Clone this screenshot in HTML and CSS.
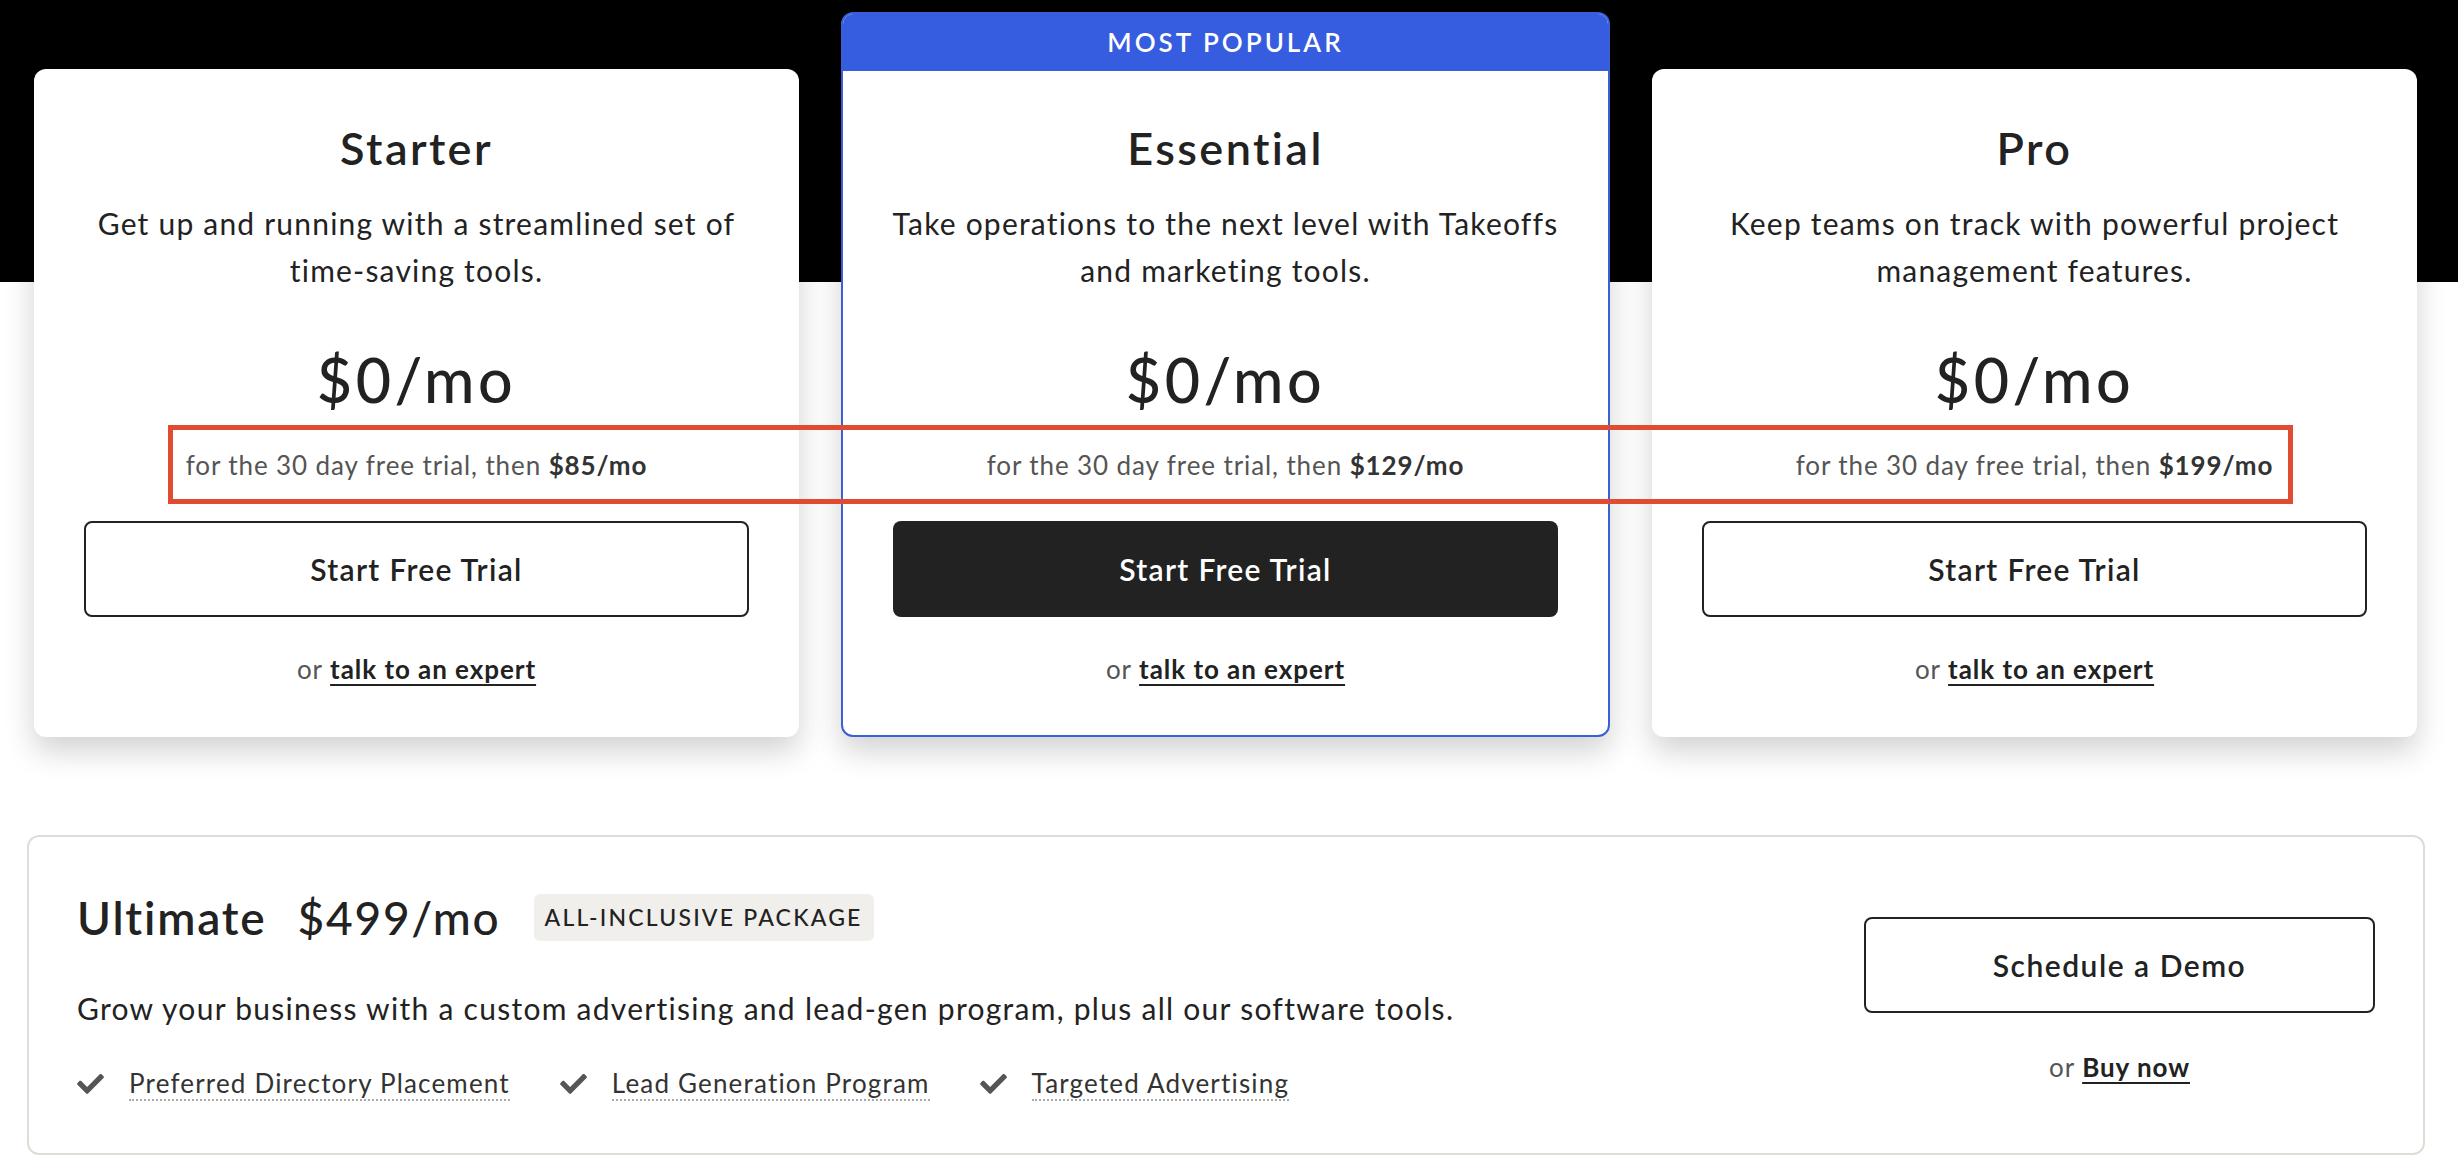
FILE: index.html
```html
<!DOCTYPE html>
<html lang="en">

<head>
  <meta charset="UTF-8">
  <meta name="viewport" content="width=device-width, initial-scale=1.0">
  <title>pricing</title>
  <link rel="stylesheet" href="styles.css">
</head>

<body>
  <div class="pricing">
    <div class="plans">
      <div class="plan">
        <div class="plan-body">
          <h2 class="plan-name">Starter</h2>
          <p class="plan-desc">Get up and running with a streamlined set of time&#8209;saving tools.</p>
          <div class="plan-price">$0/mo</div>
          <p class="plan-trial">for the 30 day free trial, then <b>$85/mo</b></p>
          <a class="btn btn-outline" href="#">Start Free Trial</a>
          <p class="plan-alt">or <a href="#">talk to an expert</a></p>
        </div>
      </div>

      <div class="plan plan-featured">
        <div class="plan-badge">MOST POPULAR</div>
        <div class="plan-body">
          <h2 class="plan-name">Essential</h2>
          <p class="plan-desc">Take operations to the next level with Takeoffs and marketing tools.</p>
          <div class="plan-price">$0/mo</div>
          <p class="plan-trial">for the 30 day free trial, then <b>$129/mo</b></p>
          <a class="btn btn-dark" href="#">Start Free Trial</a>
          <p class="plan-alt">or <a href="#">talk to an expert</a></p>
        </div>
      </div>

      <div class="plan">
        <div class="plan-body">
          <h2 class="plan-name">Pro</h2>
          <p class="plan-desc">Keep teams on track with powerful project management features.</p>
          <div class="plan-price">$0/mo</div>
          <p class="plan-trial">for the 30 day free trial, then <b>$199/mo</b></p>
          <a class="btn btn-outline" href="#">Start Free Trial</a>
          <p class="plan-alt">or <a href="#">talk to an expert</a></p>
        </div>
      </div>
    </div>

    <!-- annotation box around the trial lines -->
    <div class="highlight"></div>

    <div class="ultimate">
      <div class="ultimate-info">
        <div class="ultimate-head">
          <h2 class="ultimate-name">Ultimate</h2>
          <span class="ultimate-price">$499/mo</span>
          <span class="tag">ALL-INCLUSIVE PACKAGE</span>
        </div>
        <p class="ultimate-desc">Grow your business with a custom advertising and lead-gen program, plus all our software tools.</p>
        <ul class="features">
          <li>
            <svg class="check" viewBox="0 0 512 400" aria-hidden="true"><path d="M174 391 8 225c-10-10-10-26 0-36l36-36c10-10 26-10 36 0l112 112L432 25c10-10 26-10 36 0l36 36c10 10 10 26 0 36L210 391c-10 10-26 10-36 0z"/></svg>
            <span>Preferred Directory Placement</span>
          </li>
          <li>
            <svg class="check" viewBox="0 0 512 400" aria-hidden="true"><path d="M174 391 8 225c-10-10-10-26 0-36l36-36c10-10 26-10 36 0l112 112L432 25c10-10 26-10 36 0l36 36c10 10 10 26 0 36L210 391c-10 10-26 10-36 0z"/></svg>
            <span>Lead Generation Program</span>
          </li>
          <li>
            <svg class="check" viewBox="0 0 512 400" aria-hidden="true"><path d="M174 391 8 225c-10-10-10-26 0-36l36-36c10-10 26-10 36 0l112 112L432 25c10-10 26-10 36 0l36 36c10 10 10 26 0 36L210 391c-10 10-26 10-36 0z"/></svg>
            <span>Targeted Advertising</span>
          </li>
        </ul>
      </div>
      <div class="ultimate-cta">
        <a class="btn btn-outline btn-demo" href="#">Schedule a Demo</a>
        <p class="plan-alt">or <a href="#">Buy now</a></p>
      </div>
    </div>
  </div>
</body>

</html>
```

FILE: styles.css
```css
/* reset */
html,
body,
h2,
p,
ul,
li {
  margin: 0;
  padding: 0;
  box-sizing: border-box;
  list-style: none;
}

*,
*::before,
*::after {
  box-sizing: border-box;
}

body {
  width: 2458px;
  height: 1172px;
  overflow: hidden;
  background-color: #fff;
  color: #222;
  font-family: Lato, "Liberation Sans", sans-serif;
  letter-spacing: 0.6px;
}

/* page */
.pricing {
  position: relative;
  background: linear-gradient(#000 0, #000 282px, #fff 282px);
}

.plans {
  display: flex;
  align-items: flex-end;
  gap: 42px;
  padding: 12px 41px 0 34px;
}

.plan {
  flex: 1;
  background-color: #fff;
  border-radius: 12px;
  box-shadow: 0 14px 30px rgba(0, 0, 0, 0.18);
  overflow: hidden;
}

.plan-featured {
  border: 2px solid #3a5fd6;
}

.plan-badge {
  height: 57px;
  line-height: 57px;
  background-color: #365de0;
  color: #fff;
  text-align: center;
  font-size: 26px;
  font-weight: 600;
  letter-spacing: 3px;
}

.plan-body {
  display: flex;
  flex-direction: column;
  align-items: center;
  padding: 52px 50px 50px;
  text-align: center;
}

.plan-featured .plan-body {
  padding-top: 50px;
  padding-bottom: 48px;
}

.plan-name {
  font-size: 45px;
  line-height: 54px;
  font-weight: 600;
  letter-spacing: 2.4px;
}

.plan-desc {
  margin: 25px -6px 0;
  font-size: 30px;
  line-height: 47px;
  letter-spacing: 1.2px;
}

.plan-price {
  margin-top: 51px;
  font-size: 61px;
  line-height: 70px;
  font-weight: 500;
  letter-spacing: 3.5px;
}

.plan-trial {
  margin-top: 32px;
  font-size: 26px;
  line-height: 36px;
  color: #555;
  letter-spacing: 0.9px;
}

.plan-trial b {
  color: #333;
  font-weight: 700;
}

.btn {
  display: flex;
  align-items: center;
  justify-content: center;
  width: 100%;
  height: 96px;
  border-radius: 8px;
  font-size: 30px;
  font-weight: 600;
  letter-spacing: 1.3px;
  text-decoration: none;
}

.plan-body .btn {
  margin-top: 38px;
}

.btn-outline {
  border: 2px solid #222;
  color: #222;
  background-color: #fff;
}

.btn-dark {
  background-color: #222;
  color: #fff;
}

.btn-demo {
  letter-spacing: 1.5px;
}

.plan-alt {
  margin-top: 34px;
  font-size: 26px;
  line-height: 36px;
  color: #555;
  letter-spacing: 0.95px;
}

.plan-alt a {
  color: #222;
  font-weight: 700;
  text-decoration: underline;
  text-decoration-thickness: 2px;
  text-underline-offset: 5px;
}

/* red annotation */
.highlight {
  position: absolute;
  left: 168px;
  top: 425px;
  width: 2125px;
  height: 79px;
  border: 5px solid #e14b31;
}

/* ultimate */
.ultimate {
  display: flex;
  align-items: center;
  justify-content: space-between;
  margin: 98px 33px 0 27px;
  height: 320px;
  padding: 0 48px;
  border: 2px solid #deddd6;
  border-radius: 12px;
}

.ultimate-head {
  display: flex;
  align-items: center;
}

.ultimate-name,
.ultimate-price {
  font-size: 46px;
  line-height: 55px;
  font-weight: 600;
  letter-spacing: 1.8px;
}

.ultimate-price {
  margin-left: 31px;
  font-weight: 500;
}

.tag {
  margin-left: 33px;
  padding: 0 11px;
  height: 47px;
  line-height: 47px;
  border-radius: 6px;
  background-color: #f0efeb;
  font-size: 23px;
  font-weight: 500;
  letter-spacing: 2.2px;
}

.ultimate-desc {
  margin-top: 42px;
  font-size: 30px;
  line-height: 42px;
  letter-spacing: 1.28px;
}

.features {
  display: flex;
  gap: 50px;
  margin-top: 38px;
}

.features li {
  display: flex;
  align-items: center;
  gap: 25px;
  font-size: 26px;
  line-height: 36px;
  color: #333;
  letter-spacing: 1.18px;
}

.features span {
  border-bottom: 2px dotted #aaa;
  line-height: 32px;
}

.check {
  width: 27px;
  height: 21px;
  fill: #555;
}

.ultimate-cta {
  display: flex;
  flex-direction: column;
  align-items: center;
  width: 511px;
  margin-top: 12px;
}

.ultimate-cta .plan-alt {
  margin-top: 36px;
}
```
